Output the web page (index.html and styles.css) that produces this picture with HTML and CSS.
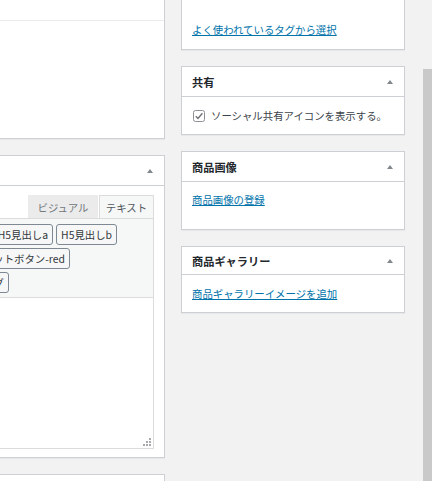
FILE: index.html
```html
<!DOCTYPE html>
<html lang="ja">
<head>
<meta charset="utf-8">
<title>商品編集</title>
<link rel="stylesheet" href="styles.css">
</head>
<body>
<div class="page">
  <div class="main-col">
    <div class="postbox main-top"><div class="top-line"></div></div>
    <div class="postbox editor-box">
      <div class="pb-header"><span class="pb-spacer"></span><span class="toggle"></span></div>
      <div class="editor-inside">
        <div class="tabs">
          <span class="tab">ビジュアル</span>
          <span class="tab active">テキスト</span>
        </div>
        <div class="editor-container">
          <div class="qt-toolbar">
            <div class="qt-row r1"><span class="qt-btn">H5見出しa</span><span class="qt-btn">H5見出しb</span></div>
            <div class="qt-row r2"><span class="qt-btn">フラットボタン-red</span></div>
            <div class="qt-row r3"><span class="qt-btn">閉じタグ</span></div>
          </div>
          <div class="textarea">
            <svg class="resize" width="8" height="8" viewBox="0 0 8 8"><rect x="6" y="0" width="2" height="2"/><rect x="3" y="3" width="2" height="2"/><rect x="6" y="3" width="2" height="2"/><rect x="0" y="6" width="2" height="2"/><rect x="3" y="6" width="2" height="2"/><rect x="6" y="6" width="2" height="2"/></svg>
          </div>
        </div>
      </div>
    </div>
    <div class="postbox next-box"></div>
  </div>

  <div class="side-col">
    <div class="postbox tags-box">
      <div class="pb-body body-tags"><a class="link" href="#">よく使われているタグから選択</a></div>
    </div>
    <div class="postbox share-box">
      <div class="pb-header"><h2 class="pb-title">共有</h2><span class="toggle"></span></div>
      <div class="pb-body body-share">
        <label class="check">
          <svg class="cb" width="12" height="12" viewBox="0 0 12 12"><rect x="0.5" y="0.5" width="11" height="11" rx="2" ry="2" fill="#fff" stroke="#8c8f94"/><path d="M2.8 6.2 L5 8.4 L9.4 3.2" fill="none" stroke="#6d7175" stroke-width="1.4"/></svg>
          <span>ソーシャル共有アイコンを表示する。</span>
        </label>
      </div>
    </div>
    <div class="postbox image-box">
      <div class="pb-header"><h2 class="pb-title">商品画像</h2><span class="toggle"></span></div>
      <div class="pb-body body-image"><a class="link" href="#">商品画像の登録</a></div>
    </div>
    <div class="postbox gallery-box">
      <div class="pb-header short"><h2 class="pb-title">商品ギャラリー</h2><span class="toggle"></span></div>
      <div class="pb-body body-gallery"><a class="link" href="#">商品ギャラリーイメージを追加</a></div>
    </div>
  </div>

  <div class="spacer"></div>
  <div class="scrollbar"><div class="thumb"></div></div>
</div>
</body>
</html>
```

FILE: styles.css
```css
html, body {
  margin: 0;
  padding: 0;
}
body {
  background: #f2f2f2;
  font-family: "Noto Sans CJK JP", "Noto Sans", sans-serif;
  font-size: 10.4px;
  color: #3c434a;
}
.page {
  display: flex;
  height: 481px;
  overflow: hidden;
  gap: 16px;
}
.main-col {
  flex: 0 0 401px;
  margin-left: -236px;
  display: flex;
  flex-direction: column;
  gap: 16px;
}
.postbox {
  background: #fff;
  border: 1px solid #ccd0d4;
  box-shadow: 0 1px 1px rgba(0, 0, 0, 0.04);
  box-sizing: border-box;
  flex: 0 0 auto;
}
.main-top {
  height: 139px;
  border-top: none;
}
.top-line {
  height: 20px;
  border-bottom: 1px solid #ececec;
}
.pb-header {
  height: 29px;
  display: flex;
  align-items: center;
  justify-content: space-between;
  padding: 0 10px;
  border-bottom: 1px solid #ccd0d4;
}
.pb-header.short {
  height: 27px;
}
.pb-title {
  margin: 0;
  font-size: 11.2px;
  font-weight: 700;
  color: #23282d;
  line-height: 14px;
}
.toggle {
  width: 0;
  height: 0;
  border-left: 3px solid transparent;
  border-right: 3px solid transparent;
  border-bottom: 4px solid #82878c;
  margin-right: 1px;
}
.editor-inside {
  padding: 9px 10px 8px;
}
.tabs {
  display: flex;
  justify-content: flex-end;
  gap: 1px;
  height: 23px;
}
.tab {
  display: flex;
  align-items: center;
  justify-content: center;
  box-sizing: border-box;
  background: #ebebeb;
  border: 1px solid #ebebeb;
  border-bottom: none;
  color: #72777c;
  font-size: 10.4px;
}
.tab:first-child {
  width: 70px;
}
.tab.active {
  width: 55px;
  background: #f6f7f7;
  border-color: #dcdcde;
  color: #50575e;
}
.editor-container {
  border: 1px solid #dcdcde;
}
.qt-toolbar {
  background: #f6f7f7;
  border-bottom: 1px solid #dcdcde;
  padding: 5px 3px 4px;
  display: flex;
  flex-direction: column;
  gap: 3px;
}
.qt-row {
  display: flex;
  justify-content: flex-end;
  gap: 3px;
  height: 21px;
}
.r1 { padding-right: 33px; }
.r2 { padding-right: 80px; }
.r3 { padding-right: 141px; }
.qt-btn {
  display: flex;
  align-items: center;
  box-sizing: border-box;
  height: 21px;
  padding: 0 4px;
  background: #f7f7f7;
  border: 1px solid #7e8993;
  border-radius: 3px;
  color: #32373c;
  font-size: 10.4px;
  white-space: nowrap;
}
.textarea {
  height: 150px;
  background: #fff;
  position: relative;
}
.resize {
  position: absolute;
  right: 2px;
  bottom: 2px;
  fill: #a7aaad;
}
.next-box {
  height: 30px;
}
.side-col {
  flex: 0 0 224px;
  display: flex;
  flex-direction: column;
  gap: 16px;
}
.tags-box {
  height: 50px;
  border-top: none;
}
.pb-body {
  padding: 0 10px;
  box-sizing: border-box;
  line-height: 14px;
}
.body-tags { padding-top: 23px; }
.share-box { height: 69px; }
.body-share { padding-top: 12px; }
.image-box { height: 79px; }
.body-image { padding-top: 11px; }
.gallery-box { height: 67px; }
.body-gallery { padding-top: 12px; }
.link {
  color: #0073aa;
  text-decoration: underline;
  font-size: 10.4px;
}
.check {
  display: flex;
  align-items: center;
  gap: 6px;
  padding-left: 1px;
  color: #3c434a;
}
.cb {
  flex: 0 0 12px;
}
.spacer {
  flex: 1;
  margin-right: -16px;
}
.scrollbar {
  flex: 0 0 11px;
  background: #f2f2f2;
  padding-top: 69px;
  padding-left: 2px;
  box-sizing: border-box;
  display: flex;
  flex-direction: column;
}
.thumb {
  flex: 1;
  background: #c9c9c9;
}
```
